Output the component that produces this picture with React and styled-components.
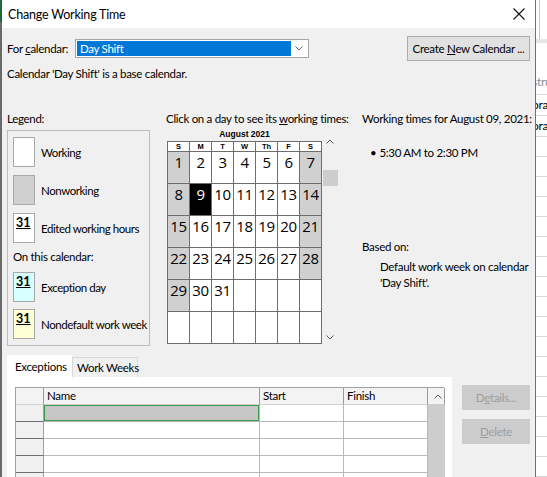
import React from "react";
import styled, { createGlobalStyle } from "styled-components";

const GlobalStyle = createGlobalStyle`
  html, body { margin: 0; padding: 0; }
  body {
    background: #fff;
    font-family: Lato, "Noto Sans", sans-serif;
    font-size: 11.5px;
    letter-spacing: -0.3px;
    color: #000;
  }
`;

const Screen = styled.div`
  display: flex;
  width: 547px;
  height: 477px;
  overflow: hidden;
  background: #fff;
`;

const LeftEdge = styled.div`
  width: 2px;
  flex: none;
  background: linear-gradient(#1d6b3a 0 22px, #6a6a6a 22px);
`;

const Dialog = styled.div`
  width: 534px;
  flex: none;
  display: flex;
  flex-direction: column;
  background: #f0f0f0;
  border-right: 1px solid #707070;
  box-sizing: border-box;
`;

const TitleBar = styled.div`
  height: 28px;
  flex: none;
  display: flex;
  align-items: center;
  justify-content: space-between;
  background: #fff;
  padding-left: 6px;
  font-size: 12.5px;
  letter-spacing: -0.2px;
`;

const CloseButton = styled.div`
  width: 32px;
  height: 28px;
  display: flex;
  align-items: center;
  justify-content: center;
`;

const Body = styled.div`
  flex: 1;
  display: flex;
  flex-direction: column;
  padding: 0 5px 0 5px;
  min-height: 0;
`;

const TopRow = styled.div`
  margin-top: 8px;
  height: 25px;
  display: flex;
  align-items: center;
`;

const Label = styled.div`
  width: 68px;
  flex: none;
  white-space: nowrap;
`;

const Combo = styled.div`
  width: 234px;
  height: 19px;
  box-sizing: border-box;
  border: 1px solid #a6a6a6;
  background: #fff;
  display: flex;
  align-items: center;
  padding: 1px;
`;

const ComboValue = styled.div`
  width: 214px;
  height: 100%;
  background: #0078d7;
  color: #fff;
  padding-left: 3px;
  line-height: 15px;
  box-sizing: border-box;
`;

const ComboArrow = styled.div`
  flex: 1;
  display: flex;
  justify-content: center;
  align-items: center;
`;

const Spacer = styled.div`
  flex: 1;
`;

const Button = styled.div`
  width: ${(p) => p.$w || 123}px;
  height: 25px;
  box-sizing: border-box;
  border: 1px solid ${(p) => (p.$disabled ? "#cccccc" : "#adadad")};
  background: ${(p) => (p.$disabled ? "#cccccc" : "#e1e1e1")};
  color: ${(p) => (p.$disabled ? "#9e9e9e" : "#000")};
  display: flex;
  align-items: center;
  justify-content: center;
  white-space: pre;
`;

const U = styled.span`
  text-decoration: underline;
`;

const InfoLine = styled.div`
  margin-top: 5px;
  line-height: 16px;
`;

const Middle = styled.div`
  margin-top: 29px;
  display: flex;
`;

const Heading = styled.div`
  line-height: 16px;
  white-space: pre;
`;

const LegendCol = styled.div`
  width: 143px;
  flex: none;
  display: flex;
  flex-direction: column;
`;

const LegendBox = styled.div`
  margin-top: 3px;
  border: 1px solid #bcbcbc;
  padding: 6px 5px 6px 5px;
  display: flex;
  flex-direction: column;
`;

const LegendItem = styled.div`
  display: flex;
  align-items: center;
  gap: 6px;
  margin-top: ${(p) => p.$mt || 0}px;
  white-space: nowrap;
  letter-spacing: -0.45px;
`;

const Swatch = styled.div`
  width: 22px;
  height: 30px;
  box-sizing: border-box;
  border: 1px solid #a8a8a8;
  background: ${(p) => p.$bg};
  flex: none;
  font-weight: 700;
  font-size: 12.5px;
  letter-spacing: 0;
  line-height: 14px;
  padding: 2px 0 0 2px;
  span {
    text-decoration: underline;
  }
`;

const SubHeading = styled.div`
  margin-top: 6px;
  line-height: 16px;
`;

const CalendarCol = styled.div`
  width: 196px;
  margin-left: 16px;
  flex: none;
  display: flex;
  flex-direction: column;
`;

const CalendarWrap = styled.div`
  display: flex;
  margin-left: 1px;
`;

const CalendarMonth = styled.div`
  display: flex;
  flex-direction: column;
`;

const MonthCaption = styled.div`
  height: 14px;
  line-height: 14px;
  text-align: center;
  font-weight: 700;
  font-size: 8.5px;
  letter-spacing: 0;
  font-family: "Liberation Sans", Arial, sans-serif;
`;

const DayGrid = styled.div`
  display: grid;
  grid-template-columns: repeat(7, 21px);
  grid-template-rows: 9px repeat(6, 31px);
  gap: 1px;
  padding: 1px;
  background: #6e6e6e;
`;

const DayName = styled.div`
  background: #fff;
  font-size: 7.5px;
  font-weight: 700;
  letter-spacing: 0;
  font-family: "Liberation Sans", Arial, sans-serif;
  line-height: 9px;
  text-align: center;
`;

const DayCell = styled.div`
  background: ${(p) => (p.$selected ? "#000" : p.$off ? "#d0d0d0" : "#fff")};
  color: ${(p) => (p.$selected ? "#fff" : "#000")};
  font-family: "Open Sans", "Noto Sans", sans-serif;
  font-size: 15px;
  line-height: 21px;
  text-align: center;
  letter-spacing: -0.4px;
`;

const ScrollCol = styled.div`
  width: 16px;
  display: flex;
  flex-direction: column;
  align-items: center;
`;

const ScrollArrow = styled.div`
  height: 12px;
  display: flex;
  align-items: center;
  justify-content: center;
  margin-top: ${(p) => p.$mt || 0}px;
`;

const ScrollThumb = styled.div`
  width: 15px;
  height: 16px;
  background: #cdcdcd;
  margin-top: ${(p) => p.$mt || 0}px;
`;

const RightCol = styled.div`
  flex: 1;
  display: flex;
  flex-direction: column;
`;

const TimeLine = styled.div`
  margin-top: 18px;
  padding-left: 8px;
  line-height: 16px;
  display: flex;
  gap: 3px;
`;

const BasedOn = styled.div`
  margin-top: 78px;
  line-height: 16px;
`;

const BasedText = styled.div`
  margin-top: 4px;
  padding-left: 18px;
  line-height: 16px;
`;

const Bottom = styled.div`
  margin-top: 9px;
  flex: 1;
  display: flex;
  min-height: 0;
`;

const TabArea = styled.div`
  width: 445px;
  flex: none;
  display: flex;
  flex-direction: column;
`;

const TabRow = styled.div`
  height: 22px;
  display: flex;
  align-items: flex-end;
`;

const Tab = styled.div`
  width: ${(p) => p.$w}px;
  height: ${(p) => (p.$active ? 22 : 20)}px;
  box-sizing: border-box;
  background: ${(p) => (p.$active ? "#fff" : "#f0f0f0")};
  border: 1px solid ${(p) => (p.$active ? "#fff" : "#d9d9d9")};
  border-bottom: none;
  display: flex;
  align-items: center;
  padding-left: ${(p) => (p.$active ? 7 : 4)}px;
  padding-bottom: ${(p) => (p.$active ? 1 : 0)}px;
  white-space: nowrap;
`;

const TabPanel = styled.div`
  flex: 1;
  background: #fff;
  padding: 10px 8px 0 8px;
`;

const Table = styled.div`
  display: grid;
  grid-template-columns: 28px 216px 84px 84px 17px;
  grid-auto-rows: 17px;
  border-top: 1px solid #a0a0a0;
  border-left: 1px solid #a0a0a0;
`;

const HeadCell = styled.div`
  background: #f3f3f3;
  border-right: 1px solid #9a9a9a;
  border-bottom: 1px solid #d0d0d0;
  padding-left: 3px;
  line-height: 16px;
  display: flex;
  align-items: center;
  justify-content: ${(p) => (p.$center ? "center" : "flex-start")};
`;

const RowHead = styled.div`
  background: #f0f0f0;
  border-right: 1px solid #a0a0a0;
  border-bottom: 1px solid #6f6f6f;
`;

const DataCell = styled.div`
  background: ${(p) => (p.$active ? "#c6c6c6" : "#fff")};
  border-right: 1px solid #b8b8b8;
  border-bottom: 1px solid #b8b8b8;
  box-shadow: ${(p) => (p.$active ? "inset 0 0 0 1px #3c9a4f" : "none")};
`;

const TableScroll = styled.div`
  grid-column: 5;
  grid-row: 2 / span 5;
  background: #cdcdcd;
`;

const ButtonCol = styled.div`
  margin-left: 10px;
  margin-top: 30px;
  display: flex;
  flex-direction: column;
  gap: 9px;
`;

const ExcelStrip = styled.div`
  flex: 1;
  display: flex;
  flex-direction: column;
  overflow: hidden;
  background: #fff;
`;

const ExcelTop = styled.div`
  height: 66px;
  border-left: 1px solid #c4c4c4;
  margin-left: 3px;
`;

const ExcelBand = styled.div`
  height: 7px;
  background: #e6e6e6;
  margin-bottom: 27px;
`;

const ExcelRow = styled.div`
  height: ${(p) => p.$h || 19}px;
  flex: none;
  border-bottom: 1px solid #dadada;
  line-height: ${(p) => p.$h || 19}px;
  white-space: nowrap;
  overflow: hidden;
  text-indent: -4px;
  color: ${(p) => (p.$muted ? "#8a8a8a" : "#000")};
  font-size: 12px;
`;

const Chevron = ({ up, color = "#555" }) => (
  <svg width="8" height="5" viewBox="0 0 8 5">
    <path
      d={up ? "M0.5 4.5 L4 1 L7.5 4.5" : "M0.5 0.5 L4 4 L7.5 0.5"}
      fill="none"
      stroke={color}
      strokeWidth="1"
    />
  </svg>
);

const dayNames = ["S", "M", "T", "W", "Th", "F", "S"];
const cells = Array.from({ length: 42 }, (_, i) => (i < 31 ? i + 1 : null));

export default function App() {
  return (
    <>
      <GlobalStyle />
      <Screen>
        <LeftEdge />
        <Dialog>
          <TitleBar>
            <span>Change Working Time</span>
            <CloseButton>
              <svg width="12" height="12" viewBox="0 0 12 12">
                <path d="M0.5 0.5 L11.5 11.5 M11.5 0.5 L0.5 11.5" stroke="#111" strokeWidth="1.1" />
              </svg>
            </CloseButton>
          </TitleBar>
          <Body>
            <TopRow>
              <Label>
                For <U>c</U>alendar:
              </Label>
              <Combo>
                <ComboValue>Day Shift</ComboValue>
                <ComboArrow>
                  <Chevron color="#666" />
                </ComboArrow>
              </Combo>
              <Spacer />
              <Button>
                Create <U>N</U>ew Calendar ...
              </Button>
            </TopRow>
            <InfoLine>Calendar 'Day Shift' is a base calendar.</InfoLine>

            <Middle>
              <LegendCol>
                <Heading>Legend:</Heading>
                <LegendBox>
                  <LegendItem>
                    <Swatch $bg="#fff" />
                    Working
                  </LegendItem>
                  <LegendItem $mt={8}>
                    <Swatch $bg="#d0d0d0" />
                    Nonworking
                  </LegendItem>
                  <LegendItem $mt={8}>
                    <Swatch $bg="#fff">
                      <span>31</span>
                    </Swatch>
                    Edited working hours
                  </LegendItem>
                  <SubHeading>On this calendar:</SubHeading>
                  <LegendItem $mt={7}>
                    <Swatch $bg="#d6ffff">
                      <span>31</span>
                    </Swatch>
                    Exception day
                  </LegendItem>
                  <LegendItem $mt={7}>
                    <Swatch $bg="#ffffd6">
                      <span>31</span>
                    </Swatch>
                    Nondefault work week
                  </LegendItem>
                </LegendBox>
              </LegendCol>

              <CalendarCol>
                <Heading>
                  Click on a day to see its <U>w</U>orking times:
                </Heading>
                <CalendarWrap>
                  <CalendarMonth>
                    <MonthCaption>August 2021</MonthCaption>
                    <DayGrid>
                      {dayNames.map((d, i) => (
                        <DayName key={"n" + i}>{d}</DayName>
                      ))}
                      {cells.map((d, i) => {
                        const col = i % 7;
                        const off = d !== null && (col === 0 || col === 6);
                        return (
                          <DayCell key={i} $off={off} $selected={d === 9}>
                            {d}
                          </DayCell>
                        );
                      })}
                    </DayGrid>
                  </CalendarMonth>
                  <ScrollCol>
                    <ScrollArrow $mt={8}>
                      <Chevron up />
                    </ScrollArrow>
                    <ScrollThumb $mt={23} />
                    <ScrollArrow $mt={145}>
                      <Chevron />
                    </ScrollArrow>
                  </ScrollCol>
                </CalendarWrap>
              </CalendarCol>

              <RightCol>
                <Heading>Working times for August 09, 2021:</Heading>
                <TimeLine>
                  <span>•</span>
                  <span>5:30 AM to 2:30 PM</span>
                </TimeLine>
                <BasedOn>Based on:</BasedOn>
                <BasedText>
                  Default work week on calendar
                  <br />
                  'Day Shift'.
                </BasedText>
              </RightCol>
            </Middle>

            <Bottom>
              <TabArea>
                <TabRow>
                  <Tab $active $w={65}>
                    Exceptions
                  </Tab>
                  <Tab $w={66}>Work Weeks</Tab>
                </TabRow>
                <TabPanel>
                  <Table>
                    <HeadCell />
                    <HeadCell>Name</HeadCell>
                    <HeadCell>Start</HeadCell>
                    <HeadCell>Finish</HeadCell>
                    <HeadCell $center>
                      <Chevron up />
                    </HeadCell>
                    {[0, 1, 2, 3, 4].map((r) => (
                      <React.Fragment key={r}>
                        <RowHead />
                        <DataCell $active={r === 0} />
                        <DataCell />
                        <DataCell />
                      </React.Fragment>
                    ))}
                    <TableScroll />
                  </Table>
                </TabPanel>
              </TabArea>
              <ButtonCol>
                <Button $w={68} $disabled>
                  D<U>e</U>tails...
                </Button>
                <Button $w={68} $disabled>
                  <U>D</U>elete
                </Button>
              </ButtonCol>
            </Bottom>
          </Body>
        </Dialog>
        <ExcelStrip>
          <ExcelTop />
          <ExcelBand />
          <ExcelRow $h={24} $muted>
            stru
          </ExcelRow>
          <ExcelRow $h={20}>ora</ExcelRow>
          <ExcelRow $h={20}>ora</ExcelRow>
          {Array.from({ length: 17 }, (_, i) => (
            <ExcelRow key={i} />
          ))}
        </ExcelStrip>
      </Screen>
    </>
  );
}
